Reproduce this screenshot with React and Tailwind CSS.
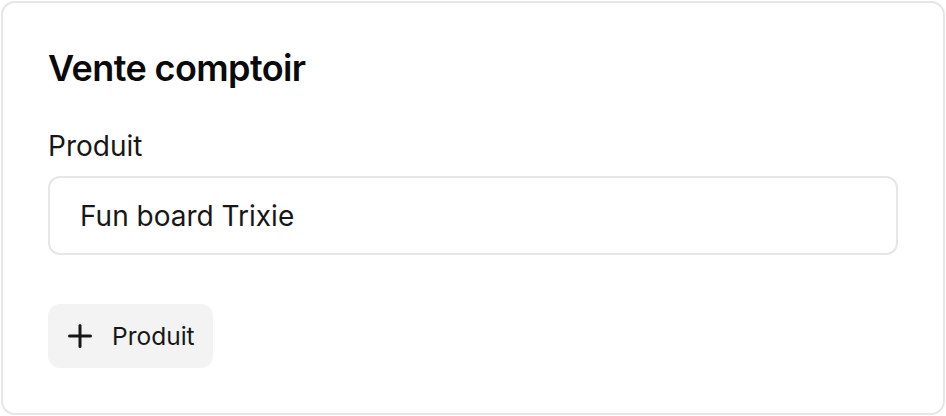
import { Plus } from 'lucide-react'

export default function App() {
  return (
    <div className="p-px bg-white" style={{ fontFamily: 'Inter, "Noto Sans", sans-serif' }}>
      <div className="w-[944px] h-[414px] border-2 border-[#e6e6e6] rounded-[14px] bg-white px-[45px] pt-[45px] pb-[45px] flex flex-col">
        <h2 className="text-[36px] leading-[40px] font-semibold text-[#0a0a0a] tracking-[-0.6px]">Vente comptoir</h2>

        <label className="mt-[38px] text-[28px] leading-[40px] text-[#171717]">Produit</label>
        <div className="mt-[10px] h-[79px] border-2 border-[#e6e6e6] rounded-[12px] px-[30px] flex items-center">
          <span className="text-[28px] leading-[34px] text-[#171717]">Fun board Trixie</span>
        </div>

        <div className="mt-[49px]">
          <button className="h-[64px] inline-flex items-center gap-[14px] pl-[14px] pr-[18px] bg-[#f3f3f3] rounded-[12px] text-[24.5px] text-[#171717]">
            <Plus size={36} strokeWidth={2} />
            <span>Produit</span>
          </button>
        </div>
      </div>
    </div>
  )
}
